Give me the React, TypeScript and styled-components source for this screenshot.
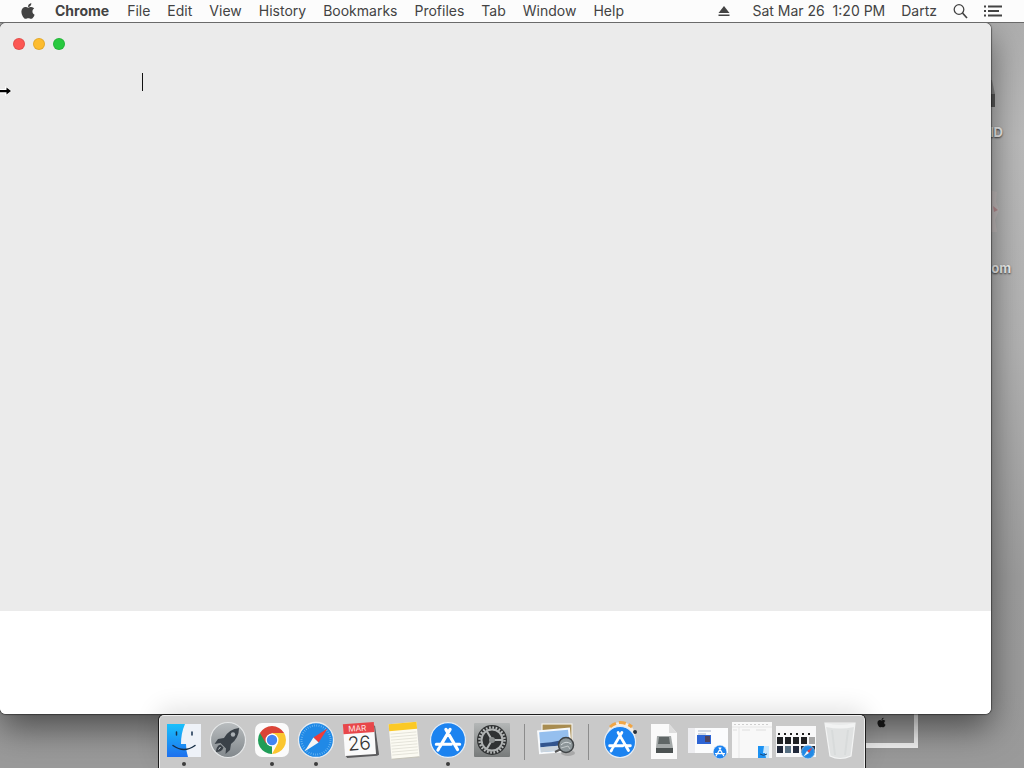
import React from "react";
import styled, { createGlobalStyle, css } from "styled-components";
import { FaApple } from "react-icons/fa";

const GlobalStyle = createGlobalStyle`
  * { box-sizing: border-box; }
  body {
    margin: 0;
    font-family: Inter, "Liberation Sans", sans-serif;
    font-size: 14px;
    color: #434343;
  }
  button {
    border: 0;
    padding: 0;
    background: none;
    color: inherit;
    font: inherit;
  }
`;

const Desktop = styled.div`
  display: flex;
  flex-direction: column;
  min-height: 100vh;
  position: relative;
  overflow: hidden;
  background: linear-gradient(#acacac 0%, #bababa 18%, #b2b2b2 45%, #9c9c9c 75%, #9a9a9a 100%);
`;

const MenuBar = styled.header`
  display: flex;
  align-items: center;
  justify-content: space-between;
  height: 23px;
  padding: 0 22px 0 19px;
  background: #fcfcfc;
  border-bottom: 1px solid #6a6a6a;
  position: relative;
  z-index: 2;
`;

const MenuGroup = styled.nav<{ $gap: number }>`
  display: flex;
  align-items: center;
  gap: ${(p) => p.$gap}px;
`;

const MenuItem = styled.button<{ $bold?: boolean }>`
  display: flex;
  align-items: center;
  height: 22px;
  line-height: 22px;
  white-space: pre;
  ${(p) => p.$bold && css`font-weight: 700;`}
`;

const Stage = styled.main`
  display: flex;
  flex: 1;
  padding: 0 33px 54px 0;
`;

const AppWindow = styled.section`
  display: flex;
  flex: 1;
  flex-direction: column;
  position: relative;
  z-index: 1;
  border-radius: 6px;
  overflow: hidden;
  background: #fff;
  box-shadow: 0 0 1px 1px rgba(0, 0, 0, 0.4), 0 14px 34px rgba(0, 0, 0, 0.5);
`;

const WindowBody = styled.div`
  flex: 1;
  background: #ebebeb;
`;

const TitleBar = styled.div`
  display: flex;
  align-items: center;
  gap: 8px;
  height: 42px;
  padding-left: 13px;
`;

const Light = styled.button<{ $color: string }>`
  width: 12px;
  height: 12px;
  border-radius: 50%;
  background: ${(p) => p.$color};
  box-shadow: inset 0 0 0 1px rgba(0, 0, 0, 0.1);
`;

const InputLine = styled.div`
  display: flex;
  padding: 8px 0 0 142px;
`;

const Caret = styled.span`
  width: 1px;
  height: 18px;
  background: #111;
`;

const WindowFooter = styled.div`
  height: 103px;
  background: #fff;
`;

const ResizePointer = styled.svg`
  position: absolute;
  left: 0;
  top: 85px;
  z-index: 3;
`;

const DesktopLabel = styled.span<{ $top: number; $right: number }>`
  position: absolute;
  top: ${(p) => p.$top}px;
  right: ${(p) => p.$right}px;
  font-size: 13px;
  line-height: 16px;
  font-weight: 700;
  color: #f0f0f0;
  text-shadow: 0 1px 2px rgba(0, 0, 0, 0.7);
`;

const DesktopPicture = styled.svg<{ $top: number }>`
  position: absolute;
  top: ${(p) => p.$top}px;
  right: 22px;
`;

const Frame = styled.div`
  position: absolute;
  right: 106px;
  bottom: 20px;
  display: flex;
  align-items: flex-end;
  width: 64px;
  height: 80px;
  padding: 0 0 15px 22px;
  border: solid #f4f4f4;
  border-width: 0 4px 5px 0;
  background: #a0a0a0;
  color: #1d1d1d;
`;

const Dock = styled.nav`
  position: absolute;
  left: 50%;
  bottom: 0;
  transform: translateX(-50%);
  z-index: 4;
  display: flex;
  height: 53px;
  padding: 2px 2px 0;
  border: solid #eee;
  border-width: 1px 1px 0;
  border-radius: 5px 5px 0 0;
  background: #c9c9c9;
  box-shadow: 0 0 0 1px #1c1c1c, 0 -6px 24px rgba(0, 0, 0, 0.12);
`;

const DockItem = styled.button`
  display: flex;
  flex-direction: column;
  align-items: center;
  width: 44px;
`;

const RunningDot = styled.span`
  width: 4px;
  height: 4px;
  border-radius: 50%;
  background: #3c3c3c;
`;

const Divider = styled.span`
  width: 20px;
  display: flex;
  justify-content: center;
  padding-top: 6px;
  &::after {
    content: "";
    width: 1px;
    height: 36px;
    background: #8c8c8c;
  }
`;

const range = (n: number) => Array.from({ length: n }, (_, i) => i);

const FinderArt = () => (
  <>
    <defs>
      <linearGradient id="finderBlue" x1="0" y1="0" x2="0" y2="1">
        <stop offset="0" stopColor="#19c0fb" />
        <stop offset="1" stopColor="#1e70ee" />
      </linearGradient>
    </defs>
    <rect x="5" y="6" width="34" height="33" fill="#eef2f8" />
    <path d="M5 6H23Q19 15 19 26H24Q24 33 26 39H5Z" fill="url(#finderBlue)" />
    <path d="M14.5 14v3M30 14v3" stroke="#16304d" strokeWidth="1.5" strokeLinecap="round" />
    <path d="M11 27.500Q22 35.500 33 27.500" fill="none" stroke="#142c44" strokeWidth="1.500" strokeLinecap="round" />
  </>
);

const LaunchpadArt = () => (
  <>
    <defs>
      <linearGradient id="launchGrey" x1="0" y1="0" x2="0" y2="1">
        <stop offset="0" stopColor="#b9bdbf" />
        <stop offset="1" stopColor="#82888c" />
      </linearGradient>
    </defs>
    <circle cx="22" cy="22" r="17.500" fill="url(#launchGrey)" stroke="#e6e8e9" strokeWidth="1.200" />
    <path d="M33 10Q23 11 18 20L12 21L8.500 26L14.500 25L20 30.500L19.500 36L24 32L25 26Q33 20 33 10Z" fill="#3a4148" />
    <path d="M14.500 26.500Q10 28 10 34Q16 34 17.500 29.500Z" fill="#3a4148" />
    <path d="M14.500 29L12.500 31.500" stroke="#c8cccf" strokeWidth="1" />
    <circle cx="27" cy="16.500" r="2.200" fill="#aab0b4" />
  </>
);

const ChromeArt = () => (
  <>
    <rect x="5" y="5" width="34" height="34" rx="7" fill="#fbfbfb" />
    <path d="M22 22V36A14 14 0 0 1 9.900 15Z" fill="#1f9d57" />
    <path d="M22 15H34.100A14 14 0 0 1 22 36L28 25Z" fill="#fbc62f" />
    <path d="M9.900 15A14 14 0 0 1 34.100 15H22L16 25.500Z" fill="#db4437" />
    <circle cx="22" cy="22" r="6.500" fill="#fff" />
    <circle cx="22" cy="22" r="5.200" fill="#4285f4" />
  </>
);

const Compass = ({ cx, cy, r }: { cx: number; cy: number; r: number }) => (
  <g transform={`translate(${cx} ${cy}) scale(${r / 18})`}>
    <circle r="17.500" fill="#2089e6" stroke="#e8ecf0" strokeWidth="1.300" />
    <circle r="14.500" fill="none" stroke="#83c4f5" strokeWidth="2" strokeDasharray="0.600 1.680" />
    <path d="M11.500 -11.500L2.600 2.600L-2.600 -2.600Z" fill="#ef3b3a" />
    <path d="M-11.500 11.500L2.600 2.600L-2.600 -2.600Z" fill="#f5f5f5" />
  </g>
);

const StoreBadge = ({ cx, cy, r }: { cx: number; cy: number; r: number }) => (
  <g transform={`translate(${cx} ${cy}) scale(${r / 17})`}>
    <circle r="16.500" fill="#1c83f0" stroke="#e6edf5" strokeWidth="1.200" />
    <path d="M-2 -10L9 9M2 -10L-7.500 6M-11 4H3M7 4H11M-9.500 9.500L-8.500 7.800" stroke="#fff" strokeWidth="3" strokeLinecap="round" fill="none" />
  </g>
);

const CalendarArt = () => (
  <g transform="rotate(-4 22 22)">
    <path d="M36 8L38 9L40 38L38 39H8L6 36Z" fill="#5b5b5d" />
    <rect x="6" y="6" width="31" height="31" fill="#fafafa" />
    <rect x="6" y="5" width="31" height="10" fill="#e8474a" />
    <text x="20" y="13" fontSize="8" textAnchor="middle" fill="#ffe6e4">MAR</text>
    <text x="21" y="32" fontSize="19" fontWeight="300" textAnchor="middle" fill="#333">26</text>
  </g>
);

const NotesArt = () => (
  <g transform="rotate(-5 22 22)">
    <rect x="8" y="5" width="28" height="35" fill="#fbfaf2" />
    <rect x="8" y="5" width="28" height="7" fill="#fbc926" />
    {range(8).map((i) => (
      <path key={i} d={`M9 ${15 + i * 3}H35`} stroke="#e0ded5" strokeWidth="0.800" />
    ))}
    <path d="M8 40H36" stroke="#c5c3b8" />
  </g>
);

const PreferencesArt = () => (
  <>
    <defs>
      <linearGradient id="prefGrey" x1="0" y1="0" x2="0" y2="1">
        <stop offset="0" stopColor="#b4b7b7" />
        <stop offset="1" stopColor="#777a7a" />
      </linearGradient>
    </defs>
    <rect x="4" y="5" width="36" height="34" rx="1" fill="url(#prefGrey)" />
    <circle cx="22" cy="22" r="15" fill="#303233" />
    <circle cx="22" cy="22" r="12.500" fill="none" stroke="#b9bcbc" strokeWidth="2.500" strokeDasharray="1.700 1.570" />
    <circle cx="22" cy="22" r="10.500" fill="none" stroke="#aeb1b1" strokeWidth="2" />
    <path d="M22 22L17 13.500M22 22H32M22 22L17 30.500" stroke="#b3b6b6" strokeWidth="2" />
    <circle cx="22" cy="22" r="3" fill="#8a8d8d" />
  </>
);

const PreviewArt = () => (
  <>
    <rect x="8" y="6" width="30" height="24" fill="#a88c50" stroke="#f4f1e8" strokeWidth="1.200" />
    <g transform="rotate(-5 20 23)">
      <rect x="4" y="11" width="33" height="24" fill="#f8fafc" />
      <rect x="6" y="13" width="29" height="20" fill="#95bfee" />
      <path d="M6 24L17 24L26 23L35 20V28H6Z" fill="#32558e" />
      <rect x="6" y="28" width="29" height="5" fill="#cbd4dc" />
    </g>
    <ellipse cx="34" cy="35" rx="7" ry="3" fill="#777" opacity="0.400" />
    <path d="M27 31L21 34" stroke="#555" strokeWidth="2" />
    <circle cx="32" cy="27" r="7.500" fill="#8d9699" stroke="#3f4345" strokeWidth="1.500" />
    <path d="M27 27Q32 22 37 26" stroke="#d6dcde" fill="none" />
    <path d="M27 30L34 28L36 31" stroke="#c3c9ca" fill="none" />
  </>
);

const InstallerArt = () => (
  <>
    <circle cx="23" cy="18" r="14" fill="#f5eee4" />
    <path d="M12 9Q22 0 34 9" stroke="#f0a647" strokeWidth="3" fill="none" strokeDasharray="7 3" />
    <circle cx="37" cy="14" r="2" fill="#26303c" />
    <StoreBadge cx={22} cy={24} r={16} />
  </>
);

const DiskImageArt = () => (
  <>
    <path d="M9 6H27L35 15V41H9Z" fill="#fafafa" />
    <path d="M27 6V15H35Z" fill="#dedede" />
    <path d="M15 18H29L31 30V35H14V30Z" fill="#a3a8a8" />
    <path d="M14 30H31V35H14Z" fill="#4c5252" />
    <path d="M17 19H27L28 26H16Z" fill="#5f6666" />
  </>
);

const StoreWindowArt = () => (
  <>
    <rect x="2" y="10" width="40" height="25" fill="#fbfcfd" />
    <rect x="2" y="10" width="7" height="25" fill="#ededf0" />
    <path d="M12 13H25M12 16H20" stroke="#a6b3cb" strokeWidth="1" />
    <rect x="11" y="17" width="14" height="9" fill="#2e65d4" />
    <rect x="19" y="18" width="5" height="6" fill="#4d4460" />
    <StoreBadge cx={34} cy={34} r={7} />
  </>
);

const FinderWindowArt = () => (
  <>
    <rect x="2" y="4" width="40" height="36" fill="#f8f8f8" />
    <path d="M2 9H42M9 9V40" stroke="#e6e6e6" />
    <path d="M4 6.500H38" stroke="#cfcfcf" strokeDasharray="2 2" />
    <path d="M3 12H7M12 12H20M26 12H36" stroke="#dedede" />
    <rect x="28" y="28" width="11" height="12" fill="#c9e6fb" />
    <path d="M28 28H34L33 35H35L36 40H28Z" fill="#1b92f3" />
    <path d="M30 36Q33 38.500 37 36" fill="none" stroke="#194879" />
  </>
);

const SafariWindowArt = () => (
  <>
    <rect x="2" y="8" width="40" height="31" fill="#f8f8f9" />
    {range(6).map((i) => (
      <rect key={i} x={4 + i * 6} y="15" width="2" height="2" fill="#202020" />
    ))}
    {range(5).map((i) => (
      <g key={i}>
        <rect x={3 + i * 8} y="19" width="6" height="7" fill={i === 4 ? "#a6a6a6" : "#1e2023"} />
        <rect x={3 + i * 8} y="28" width="6" height="7" fill={i === 1 ? "#587083" : "#20283a"} />
      </g>
    ))}
    <Compass cx={34} cy={34} r={7} />
  </>
);

const TrashArt = () => (
  <>
    <path d="M7 5H37L33 38Q22 43 12 38Z" fill="#e0e2e2" stroke="#f3f4f4" strokeWidth="1.200" />
    <path d="M14 12L17 37M30 12L27 37" stroke="#d8dbdb" strokeWidth="2" />
    <path d="M7 5Q22 8 37 5L36 9Q22 12 8 9Z" fill="#f2f3f3" />
  </>
);

type Entry = { label: string; art?: React.ReactNode; running?: boolean };

const dockEntries: Entry[] = [
  { label: "Finder", art: <FinderArt />, running: true },
  { label: "Launchpad", art: <LaunchpadArt /> },
  { label: "Chrome", art: <ChromeArt />, running: true },
  { label: "Safari", art: <Compass cx={22} cy={22} r={18} />, running: true },
  { label: "Calendar", art: <CalendarArt /> },
  { label: "Notes", art: <NotesArt /> },
  { label: "App Store", art: <StoreBadge cx={22} cy={22} r={18} />, running: true },
  { label: "System Preferences", art: <PreferencesArt /> },
  { label: "divider-apps" },
  { label: "Preview", art: <PreviewArt /> },
  { label: "divider-files" },
  { label: "Installer", art: <InstallerArt /> },
  { label: "Disk image", art: <DiskImageArt /> },
  { label: "App Store window", art: <StoreWindowArt /> },
  { label: "Finder window", art: <FinderWindowArt /> },
  { label: "Safari window", art: <SafariWindowArt /> },
  { label: "Trash", art: <TrashArt /> },
];

const menus = ["File", "Edit", "View", "History", "Bookmarks", "Profiles", "Tab", "Window", "Help"];

export default function App() {
  return (
    <Desktop>
      <GlobalStyle />
      <MenuBar>
        <MenuGroup $gap={18} aria-label="Application menu">
          <MenuItem aria-label="Apple menu">
            <FaApple size={18} />
          </MenuItem>
          <MenuItem $bold>Chrome</MenuItem>
          <MenuGroup $gap={17} aria-label="Chrome menus">
            {menus.map((name) => (
              <MenuItem key={name}>{name}</MenuItem>
            ))}
          </MenuGroup>
        </MenuGroup>
        <MenuGroup $gap={16} aria-label="Status menu">
          <MenuItem aria-label="Eject">
            <svg width="18" height="14" viewBox="0 0 18 14" fill="#434343">
              <path d="M6 2L11.500 9H0.500Z" />
              <path d="M0.500 10.500H11.500V12H0.500Z" />
            </svg>
          </MenuItem>
          <MenuItem>{"Sat Mar 26  1:20 PM"}</MenuItem>
          <MenuItem>Dartz</MenuItem>
          <MenuItem aria-label="Search">
            <svg width="15" height="16" viewBox="0 0 15 16" fill="none" stroke="#434343" strokeWidth="1.300">
              <circle cx="6" cy="6.500" r="4.800" />
              <path d="M9.500 10L14 15" strokeWidth="1.700" />
            </svg>
          </MenuItem>
          <MenuItem aria-label="Notification Center">
            <svg width="18" height="12" viewBox="0 0 18 12" stroke="#434343" strokeWidth="2">
              <path d="M0 1.500H2M0 6H2M0 10.500H2M4 1.500H18M4 6H15M4 10.500H18" />
            </svg>
          </MenuItem>
        </MenuGroup>
      </MenuBar>

      <DesktopPicture $top={80} width="20" height="28" viewBox="0 0 20 28">
        <path d="M0 0H10L13 14V27H0Z" fill="#888" />
        <path d="M0 14H13V27H0Z" fill="#585858" />
      </DesktopPicture>
      <DesktopLabel $top={124} $right={21}>HD</DesktopLabel>
      <DesktopPicture $top={186} width="20" height="48" viewBox="0 0 20 48">
        <path d="M0 2L15 6L14 16L17 24L13 34L15 46H0Z" fill="#c9c0c0" opacity="0.600" />
        <path d="M11 20L16 24L12 26Z" fill="#b98f92" />
      </DesktopPicture>
      <DesktopLabel $top={260} $right={13}>om</DesktopLabel>
      <Frame>
        <FaApple size={11} />
      </Frame>

      <Stage>
        <AppWindow aria-label="Chrome window">
          <WindowBody>
            <TitleBar>
              <Light $color="#fc5753" aria-label="Close" />
              <Light $color="#fdbc2e" aria-label="Minimize" />
              <Light $color="#28c93f" aria-label="Zoom" />
            </TitleBar>
            <InputLine>
              <Caret />
            </InputLine>
          </WindowBody>
          <WindowFooter />
        </AppWindow>
      </Stage>

      <ResizePointer width="12" height="12" viewBox="0 0 12 12">
        <path d="M0 4H5V1L12 6L5 11V8.500H0Z" fill="#fff" />
        <path d="M0 5H6.500V2.500L11 6L6.500 9.500V7.200H0Z" fill="#000" />
      </ResizePointer>

      <Dock aria-label="Dock">
        {dockEntries.map((entry) =>
          entry.art ? (
            <DockItem key={entry.label} aria-label={entry.label}>
              <svg width="44" height="44" viewBox="0 0 44 44">{entry.art}</svg>
              {entry.running && <RunningDot />}
            </DockItem>
          ) : (
            <Divider key={entry.label} />
          )
        )}
      </Dock>
    </Desktop>
  );
}
